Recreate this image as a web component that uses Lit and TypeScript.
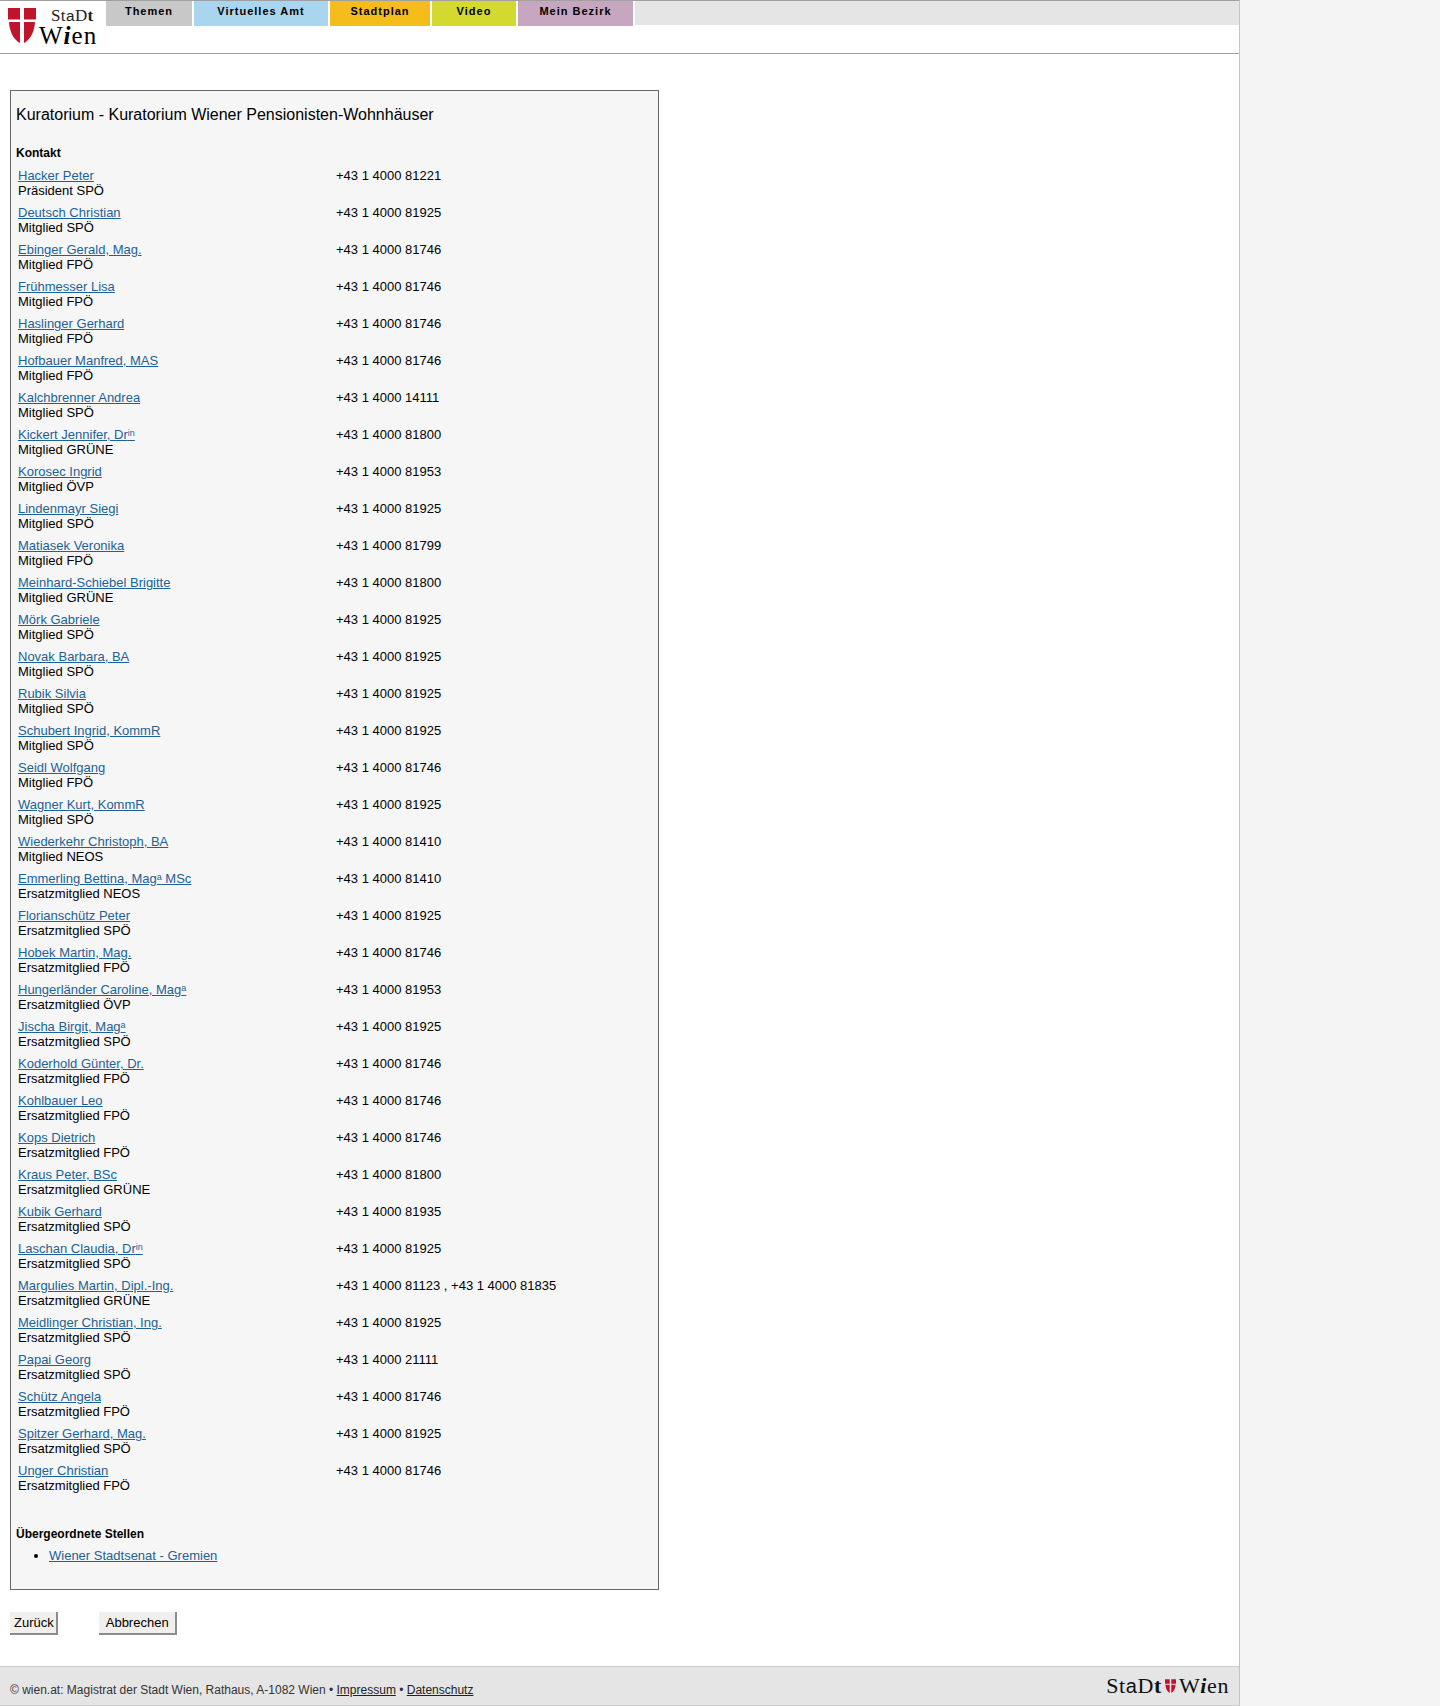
import { LitElement, html, css } from "lit";
import { customElement } from "lit/decorators.js";

type P = [any, string, string];
const sup = (s: string, i: string, rest = "") => html`${s}<sup>${i}</sup>${rest}`;
const people: P[] = [
  ["Hacker Peter", "Präsident SPÖ", "+43 1 4000 81221"],
  ["Deutsch Christian", "Mitglied SPÖ", "+43 1 4000 81925"],
  ["Ebinger Gerald, Mag.", "Mitglied FPÖ", "+43 1 4000 81746"],
  ["Frühmesser Lisa", "Mitglied FPÖ", "+43 1 4000 81746"],
  ["Haslinger Gerhard", "Mitglied FPÖ", "+43 1 4000 81746"],
  ["Hofbauer Manfred, MAS", "Mitglied FPÖ", "+43 1 4000 81746"],
  ["Kalchbrenner Andrea", "Mitglied SPÖ", "+43 1 4000 14111"],
  [sup("Kickert Jennifer, Dr", "in"), "Mitglied GRÜNE", "+43 1 4000 81800"],
  ["Korosec Ingrid", "Mitglied ÖVP", "+43 1 4000 81953"],
  ["Lindenmayr Siegi", "Mitglied SPÖ", "+43 1 4000 81925"],
  ["Matiasek Veronika", "Mitglied FPÖ", "+43 1 4000 81799"],
  ["Meinhard-Schiebel Brigitte", "Mitglied GRÜNE", "+43 1 4000 81800"],
  ["Mörk Gabriele", "Mitglied SPÖ", "+43 1 4000 81925"],
  ["Novak Barbara, BA", "Mitglied SPÖ", "+43 1 4000 81925"],
  ["Rubik Silvia", "Mitglied SPÖ", "+43 1 4000 81925"],
  ["Schubert Ingrid, KommR", "Mitglied SPÖ", "+43 1 4000 81925"],
  ["Seidl Wolfgang", "Mitglied FPÖ", "+43 1 4000 81746"],
  ["Wagner Kurt, KommR", "Mitglied SPÖ", "+43 1 4000 81925"],
  ["Wiederkehr Christoph, BA", "Mitglied NEOS", "+43 1 4000 81410"],
  [sup("Emmerling Bettina, Mag", "a", " MSc"), "Ersatzmitglied NEOS", "+43 1 4000 81410"],
  ["Florianschütz Peter", "Ersatzmitglied SPÖ", "+43 1 4000 81925"],
  ["Hobek Martin, Mag.", "Ersatzmitglied FPÖ", "+43 1 4000 81746"],
  [sup("Hungerländer Caroline, Mag", "a"), "Ersatzmitglied ÖVP", "+43 1 4000 81953"],
  [sup("Jischa Birgit, Mag", "a"), "Ersatzmitglied SPÖ", "+43 1 4000 81925"],
  ["Koderhold Günter, Dr.", "Ersatzmitglied FPÖ", "+43 1 4000 81746"],
  ["Kohlbauer Leo", "Ersatzmitglied FPÖ", "+43 1 4000 81746"],
  ["Kops Dietrich", "Ersatzmitglied FPÖ", "+43 1 4000 81746"],
  ["Kraus Peter, BSc", "Ersatzmitglied GRÜNE", "+43 1 4000 81800"],
  ["Kubik Gerhard", "Ersatzmitglied SPÖ", "+43 1 4000 81935"],
  [sup("Laschan Claudia, Dr", "in"), "Ersatzmitglied SPÖ", "+43 1 4000 81925"],
  ["Margulies Martin, Dipl.-Ing.", "Ersatzmitglied GRÜNE", "+43 1 4000 81123 , +43 1 4000 81835"],
  ["Meidlinger Christian, Ing.", "Ersatzmitglied SPÖ", "+43 1 4000 81925"],
  ["Papai Georg", "Ersatzmitglied SPÖ", "+43 1 4000 21111"],
  ["Schütz Angela", "Ersatzmitglied FPÖ", "+43 1 4000 81746"],
  ["Spitzer Gerhard, Mag.", "Ersatzmitglied SPÖ", "+43 1 4000 81925"],
  ["Unger Christian", "Ersatzmitglied FPÖ", "+43 1 4000 81746"],
];

const tabs = [
  ["Themen", "#c8c8c8", 86],
  ["Virtuelles Amt", "#a9d5ef", 134],
  ["Stadtplan", "#f5bd1b", 100],
  ["Video", "#d3d92e", 84],
  ["Mein Bezirk", "#c7a6bf", 115],
] as const;

const shield = (w: number, h: number) => html`<svg width=${w} height=${h} viewBox="0 0 28 35">
  <path fill="#c0142c" d="M0 0h12v11.500H0zM16 0h12v11.500H16zM1 14h11v21C6 32 1.500 24 1 14zM16 14h11c-.5 10-5 18-11 21z"/>
</svg>`;

const mark = html`<span class="w1">W</span><span class="i1">i</span><span class="en">en</span>`;
const stadt = html`<span class="st">St</span><span class="a">a</span><span class="st">D</span><span class="tt">t</span>`;

@customElement("app-root")
export class AppRoot extends LitElement {
  static styles = css`
    :host { display: block; height: 1706px; background: #f4f4f4; font: 13px/15px "Liberation Sans", Arial, sans-serif; color: #000; }
    * { box-sizing: border-box; }
    .page { width: 1240px; height: 1706px; background: #fff; border-right: 1px solid #c4c4c4; display: flex; flex-direction: column; }
    header { height: 54px; border-top: 1px solid #a0a0a0; border-bottom: 1px solid #a0a0a0; display: flex; align-items: flex-start; flex: none; }
    .logo { width: 106px; height: 52px; flex: none; display: flex; gap: 3px; padding: 7px 0 0 8px; background: #fff; }
    .logo svg { flex: none; }
    .logotext { display: flex; flex-direction: column; }
    .stadt { font: 17px/15px "Liberation Serif", serif; padding: 0 0 0 12px; letter-spacing: 0.4px; color: #222; white-space: nowrap; }
    .wien { font: 25px/22px "Liberation Serif", serif; color: #000; margin-top: 2px; white-space: nowrap; letter-spacing: 1px; }
    .i1 { font-style: italic; font-weight: bold; }
    .a { font-family: "Liberation Sans", sans-serif; font-size: 0.9em; }
    .tt { font-weight: bold; }
    nav { flex: 1; display: flex; gap: 2px; height: 25px; }
    nav a { display: block; height: 25px; text-align: center; font: bold 11px/21px "Liberation Sans", Arial, sans-serif; letter-spacing: 1px; }
    .fill { flex: 1; height: 24px; background: #e5e5e5; }
    main { flex: 1; padding: 36px 0 0 10px; }
    .box { width: 649px; height: 1500px; border: 1px solid #666; background: #f6f6f6; padding: 14px 6px 0 5px; }
    h1 { font: 16px/20px "Liberation Sans", Arial, sans-serif; margin: 0 0 21px; }
    h2 { font: bold 12px/15px "Liberation Sans", Arial, sans-serif; margin: 0; }
    .list { margin: 7px 0 0 2px; }
    .row { display: grid; grid-template-columns: 318px 1fr; height: 37px; }
    a.l { color: #1d6295; text-decoration: underline; }
    sup { font-size: 9px; line-height: 0; vertical-align: 3px; }
    .up { margin-top: 27px; }
    ul { margin: 6px 0 0; padding: 0 0 0 33px; }
    .btns { display: flex; gap: 41px; margin-top: 22px; }
    .btn { height: 23px; font: 13px/21px "Liberation Sans", Arial, sans-serif; background: #f1efeb; border: 0; border-right: 2px solid #8d8d8d; border-bottom: 2px solid #8d8d8d; padding: 0 2px 0 4px; color: #000; }
    .btn.ab { padding: 0 6px 0 7px; }
    footer { height: 40px; flex: none; background: #e5e5e5; border-top: 1px solid #ccc; border-bottom: 1px solid #ccc; display: flex; justify-content: space-between; align-items: center; padding: 0 10px 0 10px; font-size: 12px; color: #333; }
    .copy { padding-top: 8px; }
    footer a { color: #222; text-decoration: underline; }
    .flogo { display: flex; align-items: center; gap: 3px; font: 22px/22px "Liberation Serif", serif; color: #111; }
    .flogo .wm { white-space: nowrap; letter-spacing: .6px; }
    .flogo .a { font-size: 20px; }
  `;

  render() {
    return html`<div class="page">
      <header>
        <div class="logo">${shield(28, 35)}<div class="logotext"><span class="stadt">${stadt}</span><span class="wien">${mark}</span></div></div>
        <nav>
          ${tabs.map(([t, c, w]) => html`<a style="background:${c};width:${w}px">${t}</a>`)}
          <div class="fill"></div>
        </nav>
      </header>
      <main>
        <div class="box">
          <h1>Kuratorium - Kuratorium Wiener Pensionisten-Wohnhäuser</h1>
          <h2>Kontakt</h2>
          <div class="list">
            ${people.map(([n, r, p]) => html`<div class="row"><div><a class="l" href="#">${n}</a><br />${r}</div><div>${p}</div></div>`)}
          </div>
          <h2 class="up">Übergeordnete Stellen</h2>
          <ul><li><a class="l" href="#">Wiener Stadtsenat - Gremien</a></li></ul>
        </div>
        <div class="btns"><button class="btn">Zurück</button><button class="btn ab">Abbrechen</button></div>
      </main>
      <footer>
        <div class="copy">© wien.at: Magistrat der Stadt Wien, Rathaus, A-1082 Wien • <a href="#">Impressum</a> • <a href="#">Datenschutz</a></div>
        <div class="flogo"><span class="wm">${stadt}</span>${shield(11, 14)}<span class="wm">${mark}</span></div>
      </footer>
    </div>`;
  }
}
